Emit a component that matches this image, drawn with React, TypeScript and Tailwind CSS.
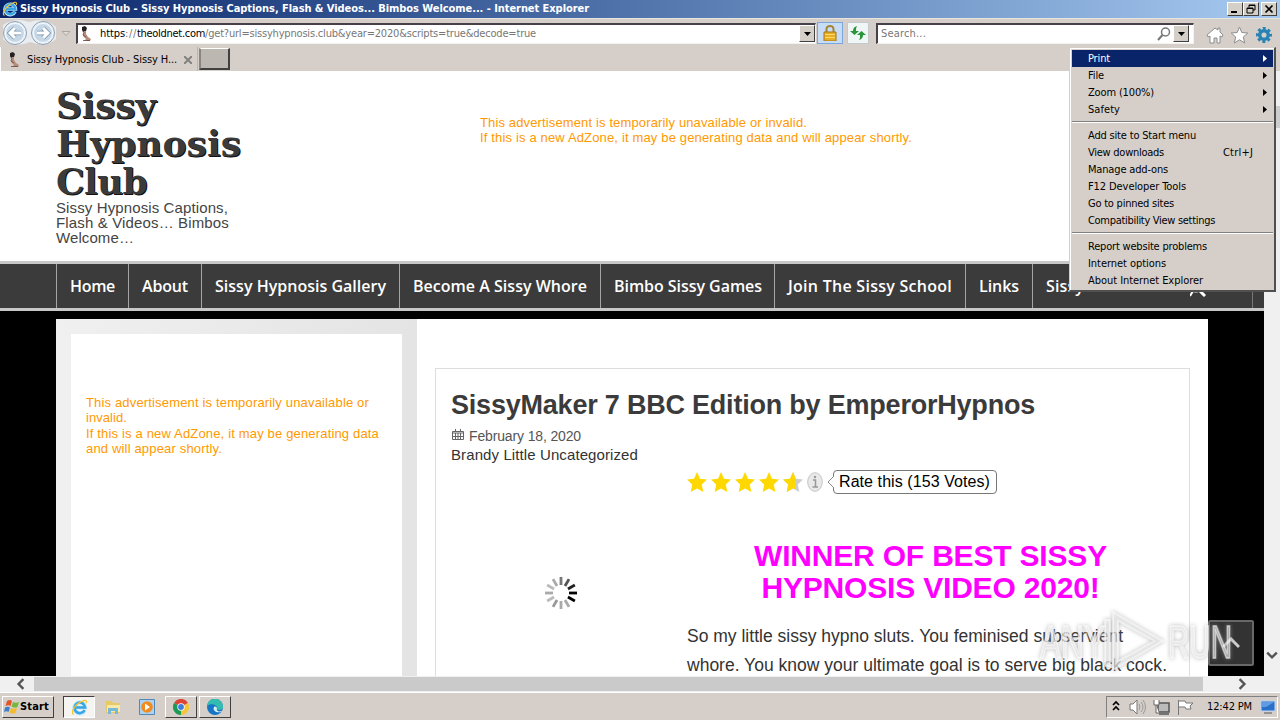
import { useLayoutEffect, useRef, useState } from 'react';
import type { ReactNode } from 'react';

// Text run spaced out to a given width
function Fit({ w, children, className = '' }: { w: number; children: string; className?: string }) {
  const ref = useRef<HTMLSpanElement>(null);
  const [spacing, setSpacing] = useState(0);

  useLayoutEffect(() => {
    if (!ref.current) return;
    const natural = ref.current.getBoundingClientRect().width;
    setSpacing((w - natural) / children.length);
  }, [w, children]);

  return (
    <span ref={ref} className={`inline-block whitespace-pre ${className}`} style={{ letterSpacing: `${spacing}px` }}>
      {children}
    </span>
  );
}

const navItems = [
  { label: 'Home', text: 45, box: 'w-[72px]' },
  { label: 'About', text: 46, box: 'w-[73px]' },
  { label: 'Sissy Hypnosis Gallery', text: 171, box: 'w-[198px]' },
  { label: 'Become A Sissy Whore', text: 174, box: 'w-[201px]' },
  { label: 'Bimbo Sissy Games', text: 148, box: 'w-[174px]' },
  { label: 'Join The Sissy School', text: 164, box: 'w-[191px]' },
  { label: 'Links', text: 40, box: 'w-[67px]' },
  { label: 'Sissy', text: 38, box: 'w-[220px]' },
];

const menuGroups = [
  [
    { label: 'Print', text: 22, sub: true, active: true },
    { label: 'File', text: 16, sub: true },
    { label: 'Zoom (100%)', text: 66, sub: true },
    { label: 'Safety', text: 32, sub: true },
  ],
  [
    { label: 'Add site to Start menu', text: 108 },
    { label: 'View downloads', text: 76, keys: 'Ctrl+J' },
    { label: 'Manage add-ons', text: 80 },
    { label: 'F12 Developer Tools', text: 98 },
    { label: 'Go to pinned sites', text: 86 },
    { label: 'Compatibility View settings', text: 127 },
  ],
  [
    { label: 'Report website problems', text: 119 },
    { label: 'Internet options', text: 78 },
    { label: 'About Internet Explorer', text: 115 },
  ],
];

const STAR = 'M10 0l3 6.8 7 .8-5.200 5 1.500 7.400L10 16.400 3.700 20l1.500-7.400L0 7.600l7-.8z';

function IeLogo({ className }: { className: string }) {
  return (
    <svg viewBox="0 0 16 16" className={className} fill="none">
      <path d="M13 10.500A5.200 5.200 0 1 1 13.400 8H4.500" stroke="#bfe9ff" strokeWidth="3.600" />
      <path d="M12.800 10.500A5 5 0 1 1 13.300 8H4.500" stroke="#39a5e5" strokeWidth="2.400" />
      <path d="M2.500 14.500C-1 13 4 4 12 1.500c2-.6 3.300 0 2.200 2.500" stroke="#f4c62d" strokeWidth="1.200" />
    </svg>
  );
}

function Favicon() {
  return (
    <svg viewBox="0 0 16 16" className="h-4 w-4 shrink-0">
      <path d="M4 1l3-1 2 2-1 3-3 1-1-2z" fill="#241f20" />
      <path d="M6 5h2l0 3 2 3 3 2-1 2H6l2-2-3-3z" fill="#b58d7c" />
      <path d="M6 6l-1 3 3 2M5 14.500h7" stroke="#6a4a44" fill="none" strokeWidth=".8" />
    </svg>
  );
}

function TitleButton({ children }: { children: ReactNode }) {
  return (
    <div className="flex h-[14px] w-4 items-center justify-center border border-t-white border-r-[#404040] border-b-[#404040] border-l-white bg-[#d4d0c8]">
      <svg viewBox="0 0 12 10" className="h-[10px] w-3" stroke="#000" fill="none">
        {children}
      </svg>
    </div>
  );
}

function DropButton() {
  return (
    <div className="flex h-[17px] w-4 shrink-0 items-center justify-center border border-t-white border-r-[#404040] border-b-[#404040] border-l-white bg-[#d4d0c8]">
      <svg viewBox="0 0 7 4" className="h-1 w-[7px]">
        <path d="M0 0h7L3.500 4z" />
      </svg>
    </div>
  );
}

function TitleBar() {
  return (
    <div className="flex h-[18px] items-center bg-linear-to-r from-[#0a246a] to-[#a6caf0] pr-[3px] pl-[2px]">
      <IeLogo className="h-4 w-4" />
      <Fit w={569} className="ml-[2px] text-[11px] leading-[18px] font-bold text-white">
        Sissy Hypnosis Club - Sissy Hypnosis Captions, Flash & Videos... Bimbos Welcome... - Internet Explorer
      </Fit>
      <div className="ml-auto flex">
        <TitleButton>
          <path d="M2 8h6" strokeWidth="2" />
        </TitleButton>
        <TitleButton>
          <path d="M4 3.500V1h6v5H8M4 1.500h6M2 4h6v5H2zM2 4.500h6" />
        </TitleButton>
        <div className="ml-[2px]">
          <TitleButton>
            <path d="M2.500 1.500l7 7M9.500 1.500l-7 7" strokeWidth="1.700" />
          </TitleButton>
        </div>
      </div>
    </div>
  );
}

function AddressBar() {
  return (
    <div className="flex h-[29px] items-center border-t border-[#e8e4de] bg-[#d6cfc9] text-[11px]">
      <svg viewBox="0 0 74 29" className="h-[29px] w-[74px] shrink-0" fill="none">
        <path d="M3 6Q15-2 29 3 44-2 56 8v12q-10 9-26 3-16 7-27-3z" fill="#e9edf1" />
        {[15, 43].map((cx) => (
          <g key={cx}>
            <circle cx={cx} cy="14" r="11.500" fill="#e6eff6" stroke="#8fa0b2" />
            <circle cx={cx} cy="14" r="9.500" fill="#c6d8e8" stroke="#f5fafd" />
          </g>
        ))}
        <path d="M21 14H10m5-5l-5 5 5 5M37 14h11m-5-5l5 5-5 5" stroke="#7590ab" strokeWidth="4.500" />
        <path d="M21 14H10m5-5l-5 5 5 5M37 14h11m-5-5l5 5-5 5" stroke="#fff" strokeWidth="3" />
        <path d="M62 12.500h8l-4 4z" fill="#dedad5" stroke="#aaa6a0" />
      </svg>
      <div className="ml-[2px] flex h-[21px] w-[740px] items-center border-t-2 border-r border-b border-l-2 border-t-[#484048] border-r-[#f4f2ee] border-b-[#f4f2ee] border-l-[#484048] bg-white">
        <Favicon />
        <div className="ml-[6px] flex flex-1 pt-px leading-[18px] text-[#777]">
          <Fit w={25} className="text-black">https</Fit>
          <Fit w={12}>://</Fit>
          <Fit w={68} className="text-black">theoldnet.com</Fit>
          <Fit w={331}>/get?url=sissyhypnosis.club&year=2020&scripts=true&decode=true</Fit>
        </div>
        <DropButton />
      </div>
      <div className="ml-px flex h-[22px] w-[26px] items-center justify-center border border-[#7ba7dc] bg-[#c6ddf5]">
        <svg viewBox="0 0 14 16" className="h-4 w-[14px]">
          <path d="M3.500 8V4a3.500 3 0 0 1 7 0v4" fill="none" stroke="#a78337" strokeWidth="2" />
          <path d="M1 7h12v9H1z" fill="#e9ae25" stroke="#a6761c" />
          <path d="M2 9.500h10M2 12.500h10" stroke="#ffdb67" />
        </svg>
      </div>
      <div className="ml-[4px] flex h-[22px] w-[22px] items-center justify-center border border-[#c5c9cb] bg-[#f0f5f5]">
        <svg viewBox="0 0 16 14" className="h-[14px] w-4" fill="#299639">
          <path d="M4.500 9L0 5h3Q3 1 7 0 5.500 2 6 5h3z" />
          <path d="M11.500 5l4.500 4h-3q0 4-4 5 1.500-2 1-5H7z" />
        </svg>
      </div>
      <div className="ml-[7px] flex h-[21px] w-[318px] items-center border-t-2 border-r border-b border-l-2 border-t-[#484048] border-r-[#f4f2ee] border-b-[#f4f2ee] border-l-[#484048] bg-white pr-1">
        <Fit w={45} className="ml-[3px] pt-[2px] text-[#777]">
          Search...
        </Fit>
        <svg viewBox="0 0 14 14" className="mr-[2px] ml-auto h-[14px] w-[14px]" fill="none" stroke="#777" strokeWidth="1.500">
          <circle cx="8.500" cy="5" r="4" />
          <path d="M5.500 8L1 13" strokeWidth="2" />
        </svg>
        <DropButton />
      </div>
      <svg viewBox="0 0 70 18" className="mt-[3px] ml-3 h-[18px] w-[70px] shrink-0" stroke="#8d8d8d" fill="#fff">
        <path d="M1 9l8-7 3 2V2h2v4l3 3-1 2-2-1v7H11v-5H8v5H4v-7l-2 1z" />
        <path d="M33.500 1l2.300 5.500 6 .5-4.500 4 1.400 6-5.200-3.200-5.200 3.200 1.400-6-4.500-4 6-.5z" />
        <circle cx="58" cy="9" r="4.300" fill="none" stroke="#2683b3" strokeWidth="3.500" />
        <circle cx="58" cy="9" r="6.600" fill="none" stroke="#2683b3" strokeWidth="2.800" strokeDasharray="2.900 2.284" strokeDashoffset="1.400" />
      </svg>
    </div>
  );
}

function TabRow() {
  return (
    <div className="flex h-6 items-start bg-[#d6cfc9] text-[11px]">
      <div className="flex h-6 w-[198px] items-center border-r border-l border-r-[#bbb5af] border-l-white pt-[2px] pl-[5px]">
        <Favicon />
        <Fit w={150} className="ml-[5px] leading-5">
          Sissy Hypnosis Club - Sissy H...
        </Fit>
        <svg viewBox="0 0 8 8" className="ml-[7px] h-2 w-2" stroke="#85827f" strokeWidth="2">
          <path d="M0 0l8 8M8 0L0 8" />
        </svg>
      </div>
      <div className="mt-px ml-px h-[22px] w-[31px] border-t border-r-2 border-b-2 border-l-2 border-t-white border-r-[#404040] border-b-[#404040] border-l-[#8a8580] bg-[#bdb7b2]" />
    </div>
  );
}

function Spinner() {
  const shades = ['#777', '#555', '#222', '#000', '#000', '#aaa', '#aaa', '#999', '#bbb', '#aaa', '#bbb', '#aaa'];
  return (
    <svg viewBox="-16 -16 32 32" className="h-8 w-8">
      {shades.map((shade, i) => (
        <path key={i} d="M0-8v-8" stroke={shade} strokeWidth="2.800" transform={`rotate(${i * 30})`} />
      ))}
    </svg>
  );
}

function SiteHeader() {
  return (
    <header className="flex h-[190px] bg-white pl-14">
      <div className="w-[424px] pt-[15px]">
        <h1 className="flex flex-col items-start font-['DejaVu_Serif',serif] text-[36px] leading-[38px] font-bold text-[#3b3b3b] [text-shadow:1px_1px_0_#111]">
          <Fit w={100}>Sissy</Fit>
          <Fit w={185}>Hypnosis</Fit>
          <Fit w={91}>Club</Fit>
        </h1>
        <p className="flex flex-col items-start text-[15px] leading-[15px] text-[#444]">
          <Fit w={172}>Sissy Hypnosis Captions,</Fit>
          <Fit w={173}>Flash & Videos… Bimbos</Fit>
          <Fit w={78}>Welcome…</Fit>
        </p>
      </div>
      <div className="flex flex-col items-start pt-11 text-[13px] leading-[15px] text-[#ff9900]">
        <Fit w={327}>This advertisement is temporarily unavailable or invalid.</Fit>
        <Fit w={432}>If this is a new AdZone, it may be generating data and will appear shortly.</Fit>
      </div>
    </header>
  );
}

function SiteNav() {
  return (
    <nav className="flex h-[50px] border-y-[3px] border-[#c8c8c8] bg-[#3b3b3b] pl-14 font-['Open_Sans',sans-serif] text-base font-semibold text-white">
      {navItems.map((item) => (
        <div key={item.label} className={`flex shrink-0 items-center border-l border-[#a5a5a5] pl-[13px] ${item.box}`}>
          <Fit w={item.text}>{item.label}</Fit>
          {item.label === 'Sissy' && (
            <svg viewBox="0 0 16 16" className="mt-[6px] ml-[106px] h-4 w-4" stroke="#fff" fill="none">
              <circle cx="6" cy="6" r="4.500" strokeWidth="2" />
              <path d="M9 9l6 6" strokeWidth="3" />
              <path d="M3 10l-3 5" strokeWidth="2" />
            </svg>
          )}
        </div>
      ))}
      <div className="border-l border-[#777]" />
    </nav>
  );
}

function Rating() {
  return (
    <div className="flex h-6 items-center pl-[251px]">
      {[0, 1, 2, 3].map((i) => (
        <svg key={i} viewBox="0 0 20 20" className="mr-1 h-5 w-5">
          <path d={STAR} fill="#ffd800" />
        </svg>
      ))}
      <svg viewBox="0 0 20 20" className="h-5 w-5">
        <path d={STAR} fill="#ccc" />
        <path d="M10 0v16.400L3.700 20l1.500-7.400L0 7.600l7-.8zM10 0l2 5v12l-2-.6z" fill="#ffd800" />
      </svg>
      <svg viewBox="0 0 16 20" className="ml-1 h-5 w-4">
        <ellipse cx="8" cy="10" rx="7.300" ry="9.300" fill="#e9e9e9" stroke="#c4c4c4" />
        <path d="M6 8h2.500v7M5.500 15h5.500" stroke="#999" fill="none" strokeWidth="1.500" />
        <circle cx="8" cy="5" r="1.200" fill="#999" />
      </svg>
      <svg viewBox="0 0 7 12" className="relative left-px ml-[3px] h-3 w-[7px]">
        <path d="M7 0L1 6l6 6" fill="#fff" stroke="#888" />
      </svg>
      <div className="h-6 w-[164px] rounded-[4px] border border-[#777] pl-[5px] text-base leading-[21px] text-black">
        <Fit w={151}>Rate this (153 Votes)</Fit>
      </div>
    </div>
  );
}

function Article() {
  return (
    <article className="mt-[49px] ml-[18px] h-[330px] w-[755px] border border-[#ddd] pl-[15px] text-[#333]">
      <h2 className="mt-[20px] text-[27px] leading-8 font-bold text-[#3b3b3b]">
        <Fit w={584}>SissyMaker 7 BBC Edition by EmperorHypnos</Fit>
      </h2>
      <div className="mt-[5px] flex h-[20px] items-center text-[14px] leading-5 text-[#555]">
        <svg viewBox="0 0 13 12" className="mt-[-3px] mr-[5px] h-3 w-[13px]" fill="none" stroke="#666">
          <path d="M1.500 2.500h11v8h-11zM1 4h12M4.500 4v6M7 4v6M9.500 4v6M1.500 7.500h11M4.500 0v3M9.500 0v3" />
        </svg>
        <Fit w={112}>February 18, 2020</Fit>
      </div>
      <div className="h-[18px] text-[15px] leading-[17px]">
        <Fit w={187}>Brandy Little Uncategorized</Fit>
      </div>
      <div className="mt-[6px] -ml-[15px]">
        <Rating />
      </div>
      <div className="mt-[46px] flex">
        <div className="w-[236px] pt-[37px] pl-[94px]">
          <Spinner />
        </div>
        <div className="w-[487px]">
          <div className="flex flex-col items-center text-[30px] leading-8 font-bold text-[#ff00ff]">
            <Fit w={353}>WINNER OF BEST SISSY</Fit>
            <Fit w={338}>HYPNOSIS VIDEO 2020!</Fit>
          </div>
          <p className="mt-[18px] flex flex-col items-start text-[17.500px] leading-[29px]">
            <Fit w={436}>So my little sissy hypno sluts. You feminised subservient</Fit>
            <Fit w={480}>whore. You know your ultimate goal is to serve big black cock.</Fit>
          </p>
        </div>
      </div>
    </article>
  );
}

function Page() {
  return (
    <div className="relative h-[605px] w-[1264px] overflow-hidden bg-black font-['Liberation_Sans',sans-serif] [font-stretch:normal]">
      <SiteHeader />
      <SiteNav />
      <div className="mt-2 ml-14 flex h-[357px] w-[1152px] bg-white">
        <aside className="w-[361px] bg-linear-to-r from-[#f0f0f0] to-[#e4e4e4] px-[15px] pt-[15px]">
          <div className="flex h-[342px] flex-col items-start bg-white pt-[61px] pl-[15px] text-[13px] leading-[15.400px] text-[#ff9900]">
            <Fit w={283}>This advertisement is temporarily unavailable or</Fit>
            <Fit w={41}>invalid.</Fit>
            <Fit w={293}>If this is a new AdZone, it may be generating data</Fit>
            <Fit w={136}>and will appear shortly.</Fit>
          </div>
        </aside>
        <Article />
      </div>
      <div className="absolute top-[549px] left-[1208px] flex h-[46px] w-[46px] items-center justify-center rounded-[2px] border-2 border-[#686868] bg-[#333]">
        <svg viewBox="0 0 18 12" className="h-3 w-[18px]" fill="none" stroke="#ccc" strokeWidth="3">
          <path d="M1 10l8-8 8 8" />
        </svg>
      </div>
      {/* translucent watermark */}
      <svg viewBox="0 0 200 70" className="absolute top-[537px] left-[1036px] h-[70px] w-[200px]">
        <g fill="#fff" fillOpacity=".5" stroke="#fff" strokeOpacity=".5" strokeWidth="2" fontFamily="Liberation Sans" fontSize="47" className="drop-shadow-[0_0_2px_#999]">
          <text x="4" y="50" textLength="65" lengthAdjust="spacingAndGlyphs">ANY</text>
          <text x="132" y="50" textLength="64" lengthAdjust="spacingAndGlyphs">RUN</text>
          <path d="M77 4l50 29-50 29zM82 13v40l36-20z" fillRule="evenodd" />
          <path d="M69 12h5v46h-5z" />
        </g>
      </svg>
    </div>
  );
}

function ToolsMenu() {
  return (
    <div className="absolute top-[47px] left-[1069px] h-[245px] w-[207px] border-t border-r-2 border-b-2 border-l border-t-[#d4d0c8] border-r-[#505050] border-b-[#505050] border-l-[#d4d0c8] bg-[#d6cfc9] text-[11px] text-black">
      <div className="h-[242px] border-t border-l border-white px-px pt-px">
        {menuGroups.map((group, g) => (
          <div key={g}>
            {g > 0 && (
              <div className="flex h-[9px] items-start pt-[3px]">
                <div className="h-[2px] w-full border-t border-b border-t-[#808080] border-b-white" />
              </div>
            )}
            {group.map((item) => (
              <div
                key={item.label}
                className={`flex h-[17px] items-center pl-4 leading-[17px] ${'active' in item ? 'bg-[#0a246a] text-white' : ''}`}
              >
                <Fit w={item.text}>{item.label}</Fit>
                {'keys' in item && <Fit w={30} className="mr-[20px] ml-auto">Ctrl+J</Fit>}
                {'sub' in item && (
                  <svg viewBox="0 0 4 7" className="mr-[6px] ml-auto h-[7px] w-1" fill="currentColor">
                    <path d="M0 0l4 3.500L0 7z" />
                  </svg>
                )}
              </div>
            ))}
          </div>
        ))}
      </div>
    </div>
  );
}

function Chevron({ d }: { d: string }) {
  return (
    <svg viewBox="0 0 10 10" className="h-3 w-3" fill="none" stroke="#555" strokeWidth="2">
      <path d={d} />
    </svg>
  );
}

function Taskbar() {
  const raised = 'flex h-[22px] w-8 items-center justify-center border border-t-white border-l-white border-r-[#404040] border-b-[#404040]';
  return (
    <div className="flex h-7 items-center border-t border-white bg-[#d6cfc9] pt-[1px] text-[11px]">
      <div className="ml-[2px] flex h-[22px] w-[52px] items-center border border-t-white border-r-[#404040] border-b-[#404040] border-l-white pl-[1px]">
        <svg viewBox="0 0 16 16" className="h-4 w-4">
          <path d="M3 2q3-2 5 0L6.500 7q-2-1.500-5 0z" fill="#e6542b" />
          <path d="M9 3q3 1.500 6 0l-1.500 5q-3 1.500-6-.5z" fill="#76b83f" />
          <path d="M1 8.500q3-1.500 5 0L4.500 13q-2-1.500-4.500 0z" fill="#3d7fca" />
          <path d="M7 9q3 1.500 6 0l-1.500 5q-3 1.500-6-.5z" fill="#f4bb2d" />
        </svg>
        <Fit w={29} className="font-bold">Start</Fit>
      </div>
      <div className="ml-[9px] flex h-[22px] w-8 items-center justify-center border border-t-[#404040] border-r-white border-b-white border-l-[#404040] bg-[#f6f4f1]">
        <IeLogo className="h-[17px] w-[17px]" />
      </div>
      <svg viewBox="0 0 16 16" className="ml-[10px] h-4 w-4">
        <path d="M1 2h6l1 2h7v10H1z" fill="#e8c968" />
        <path d="M2 6h13v7H2z" fill="#f9e9a7" />
        <path d="M3 15V9h10v6h-3v-3H6v3z" fill="#77b9d8" />
      </svg>
      <svg viewBox="0 0 16 16" className="ml-[18px] h-4 w-4">
        <path d="M.5.5h15v15H.5z" fill="#acd3f2" stroke="#5088b8" />
        <circle cx="8" cy="8" r="5.800" fill="#f28b1f" />
        <path d="M6 4.500l5 3.500-5 3.500z" fill="#fff" />
      </svg>
      <div className={`ml-[10px] ${raised}`}>
        <svg viewBox="0 0 16 16" className="h-4 w-4">
          <path d="M8 8L1 4a8 8 0 0 1 14 0z" fill="#db4437" />
          <path d="M8 8L8 16A8 8 0 0 1 1 4z" fill="#1e9a57" />
          <path d="M8 8l7-4a8 8 0 0 1-7 12z" fill="#f5c63a" />
          <circle cx="8" cy="8" r="3.700" fill="#fff" />
          <circle cx="8" cy="8" r="2.900" fill="#3d7de0" />
        </svg>
      </div>
      <div className={`ml-[2px] ${raised}`}>
        <svg viewBox="0 0 16 16" className="h-4 w-4">
          <circle cx="8" cy="8" r="8" fill="#1675c4" />
          <path d="M0 7a8 8 0 0 1 16 1c0 3-3 3.500-6 2.500C12 7 5 3 0 7z" fill="#35bcb0" />
          <path d="M7 8c-2 4 3 6 7 5l1-1c-3 1-6 0-5-2.500C10 8 8 7 7 8z" fill="#d5edf3" />
        </svg>
      </div>
      <div className="mr-[2px] ml-auto flex h-[22px] w-[172px] items-center border border-t-[#808080] border-r-white border-b-white border-l-[#808080]">
        <svg viewBox="0 0 84 18" className="ml-1 h-[18px] w-[84px]" fill="none">
          <path d="M2 7l3-3 3 3M2 12l3-3 3 3" stroke="#000" strokeWidth="1.700" />
          <path d="M19 6h3l4-4v14l-4-4h-3z" fill="#fff" stroke="#777" />
          <path d="M28 6q2 3 0 6M30 4q4 5 0 10M32 2q5 7 0 14" stroke="#999" />
          <path d="M47 5h11v9H47zM48 16h10" fill="#bbb" stroke="#555" strokeWidth="1.500" />
          <path d="M43 2v5h5V2M45 7v8h3" fill="#fff" stroke="#666" />
          <path d="M67.500 2v15M68 3h6l1 2h7l-3 3 1 3h-5l-1-2h-6" fill="#fff" stroke="#777" />
        </svg>
        <Fit w={45} className="ml-[12px]">12:42 PM</Fit>
        <svg viewBox="0 0 16 14" className="ml-[8px] h-[14px] w-4">
          <path d="M1 1h14v10H1z" fill="#2c6fc9" stroke="#bcd6f4" />
          <path d="M2 2h12L6 7H2z" fill="#609ce3" />
          <path d="M4 13h8" stroke="#555" />
        </svg>
      </div>
    </div>
  );
}

export default function App() {
  return (
    <div className="relative h-[720px] w-[1280px] overflow-hidden bg-[#d6cfc9] font-['DejaVu_Sans_Condensed','DejaVu_Sans',sans-serif] [font-stretch:condensed]">
      <TitleBar />
      <AddressBar />
      <TabRow />
      <div className="flex h-[605px]">
        <Page />
        <div className="flex w-4 flex-col items-center bg-[#f0f0f0] pt-[35px]">
          <div className="h-[22px] w-4 bg-[#cdcdcd]" />
          <div className="mt-auto mb-[15px]">
            <Chevron d="M1 3l4 4 4-4" />
          </div>
        </div>
      </div>
      <div className="flex h-4 items-center bg-[#f0f0f0] pl-[15px]">
        <Chevron d="M7 1L3 5l4 4" />
        <div className="ml-[7px] h-[14px] w-[1169px] bg-[#cacaca]" />
        <div className="ml-[33px]">
          <Chevron d="M3 1l4 4-4 4" />
        </div>
      </div>
      <Taskbar />
      <ToolsMenu />
    </div>
  );
}
